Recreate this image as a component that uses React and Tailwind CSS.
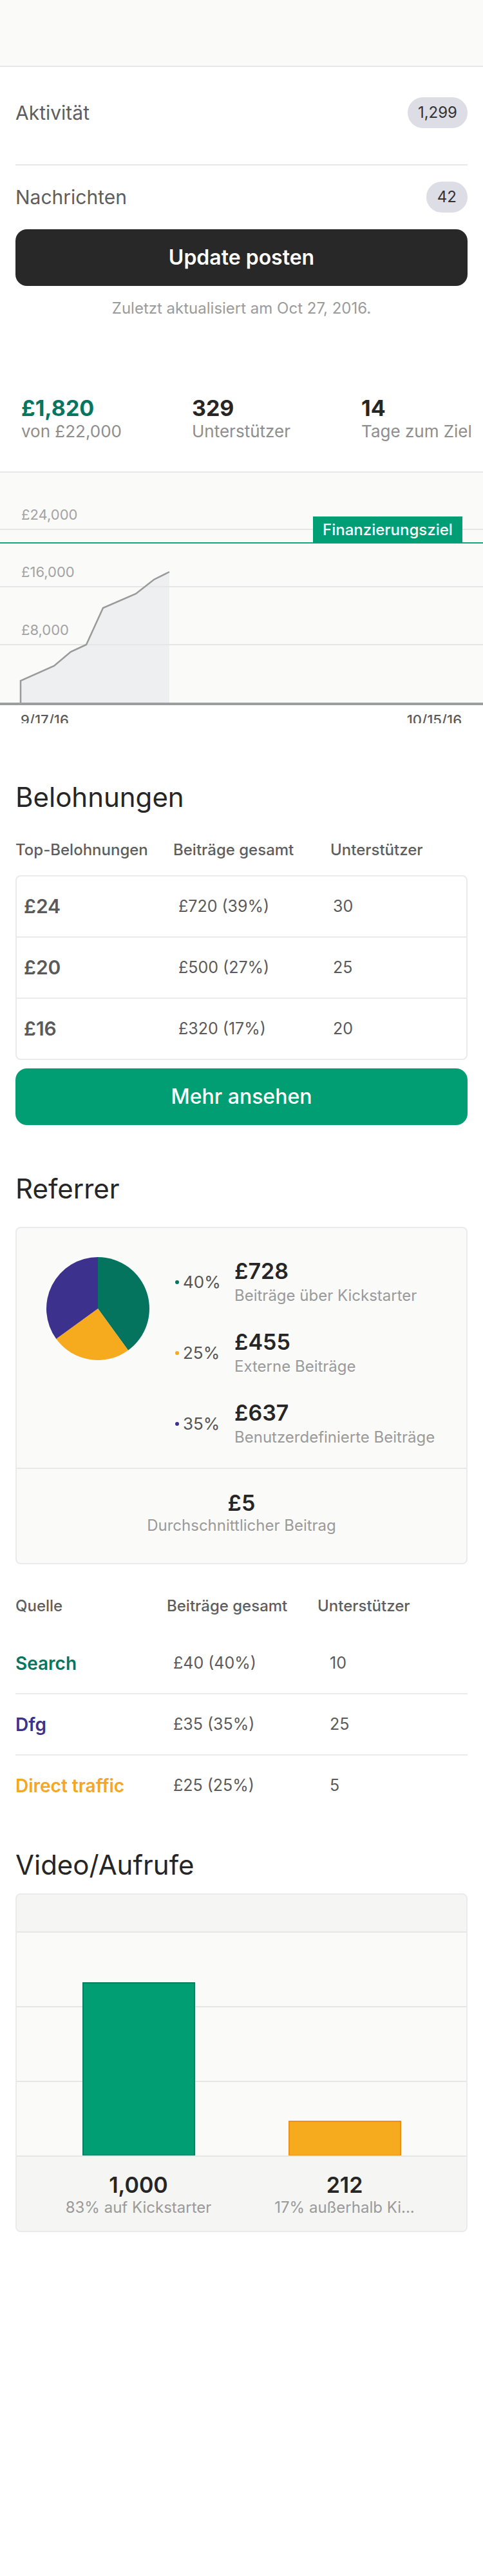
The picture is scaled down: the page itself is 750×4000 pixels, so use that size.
const rewards = [
  { amount: '£24', total: '£720 (39%)', backers: '30' },
  { amount: '£20', total: '£500 (27%)', backers: '25' },
  { amount: '£16', total: '£320 (17%)', backers: '20' },
];

const referrers = [
  { dot: 'bg-[#04745f]', pct: '40%', amount: '£728', label: 'Beiträge über Kickstarter' },
  { dot: 'bg-[#f6ab1e]', pct: '25%', amount: '£455', label: 'Externe Beiträge' },
  { dot: 'bg-[#3c318c]', pct: '35%', amount: '£637', label: 'Benutzerdefinierte Beiträge' },
];

const sources = [
  { name: 'Search', color: 'text-[#077560]', total: '£40 (40%)', backers: '10' },
  { name: 'Dfg', color: 'text-[#3c318c]', total: '£35 (35%)', backers: '25' },
  { name: 'Direct traffic', color: 'text-[#f5a623]', total: '£25 (25%)', backers: '5' },
];

const FundingChart = () => (
  <div className="relative h-[357px] bg-[#fafaf9]">
    <svg className="absolute inset-0" width="750" height="357" viewBox="0 0 750 357">
      <polygon
        points="32,357 32,323 84,300 110,278 134,267 160,210 211,188 239,166 263,154 263,357"
        fill="#eeeff1"
      />
      <line x1="0" y1="88" x2="750" y2="88" stroke="#e6e6e6" strokeWidth="2" />
      <line x1="0" y1="177" x2="750" y2="177" stroke="#e6e6e6" strokeWidth="2" />
      <line x1="0" y1="267" x2="750" y2="267" stroke="#e6e6e6" strokeWidth="2" />
      <line x1="0" y1="109" x2="750" y2="109" stroke="#17a37f" strokeWidth="2" />
      <polyline
        points="32,357 32,323 84,300 110,278 134,267 160,210 211,188 239,166 263,154"
        fill="none"
        stroke="#9a9a9a"
        strokeWidth="2.5"
      />
    </svg>
    <div className="absolute left-[33px] top-[52px] text-[22px] leading-[26px] text-[#a3a3a3]">£24,000</div>
    <div className="absolute left-[33px] top-[141px] text-[22px] leading-[26px] text-[#a3a3a3]">£16,000</div>
    <div className="absolute left-[33px] top-[231px] text-[22px] leading-[26px] text-[#a3a3a3]">£8,000</div>
    <div className="absolute left-[486px] top-[68px] flex h-[41px] w-[232px] items-center justify-center bg-[#009e74] text-[24px] font-medium text-white">
      Finanzierungsziel
    </div>
  </div>
);

const PieChart = () => (
  <svg width="160" height="160" viewBox="0 0 160 160" className="shrink-0">
    <path d="M80,80 L80,0 A80,80 0 0 1 127.02,144.72 Z" fill="#04745f" />
    <path d="M80,80 L127.02,144.72 A80,80 0 0 1 15.28,127.02 Z" fill="#f6ab1e" />
    <path d="M80,80 L15.28,127.02 A80,80 0 0 1 80,0 Z" fill="#3c318c" />
  </svg>
);

const VideoChart = () => (
  <svg width="698" height="350" viewBox="0 0 698 350" className="block bg-[#fafaf9]">
    <line x1="0" y1="1" x2="698" y2="1" stroke="#e6e6e6" strokeWidth="2" />
    <line x1="0" y1="117" x2="698" y2="117" stroke="#e6e6e6" strokeWidth="2" />
    <line x1="0" y1="233" x2="698" y2="233" stroke="#e6e6e6" strokeWidth="2" />
    <rect x="103" y="80" width="173" height="268" fill="#019e73" stroke="#0b7a60" strokeWidth="2" />
    <rect x="423" y="295" width="173" height="53" fill="#f6ab1e" stroke="#ee8f1a" strokeWidth="2" />
    <line x1="0" y1="349" x2="698" y2="349" stroke="#e6e6e6" strokeWidth="2" />
  </svg>
);

export default function App() {
  return (
    <div className="w-[750px] bg-white pb-[532px] font-['Inter',sans-serif] text-[#262626]">
      {/* top bar */}
      <div className="h-[104px] border-b-2 border-[#e7e7e7] bg-[#fafaf9]" />

      {/* activity / messages */}
      <div className="px-[24px]">
        <div className="flex items-center justify-between pt-[47px] pb-[56px]">
          <span className="text-[30px] leading-[36px] text-[#5e5e5e]">Aktivität</span>
          <span className="flex h-[48px] items-center rounded-full bg-[#dcdde5] px-[16px] text-[24px] text-[#333]">1,299</span>
        </div>
        <div className="h-[2px] bg-[#e8e8e8]" />
        <div className="flex items-center justify-between pt-[25px]">
          <span className="text-[30px] leading-[36px] text-[#5e5e5e]">Nachrichten</span>
          <span className="flex h-[48px] items-center rounded-full bg-[#dcdde5] px-[17px] text-[24px] text-[#333]">42</span>
        </div>
        <button className="mt-[26px] flex h-[88px] w-full items-center justify-center rounded-[18px] bg-[#282828] text-[32px] font-semibold text-white">
          Update posten
        </button>
        <p className="mt-[20px] text-center text-[24px] leading-[30px] text-[#9b9b9b]">
          Zuletzt aktualisiert am Oct 27, 2016.
        </p>
      </div>

      {/* stats */}
      <div className="mt-[120px] grid grid-cols-[265px_263px_1fr] pl-[33px]">
        <div>
          <div className="text-[34px] font-bold leading-[40px] text-[#077560]">£1,820</div>
          <div className="mt-[1px] text-[26px] leading-[30px] text-[#8e8e8e]">von £22,000</div>
        </div>
        <div>
          <div className="text-[34px] font-bold leading-[40px]">329</div>
          <div className="mt-[1px] text-[26px] leading-[30px] text-[#8e8e8e]">Unterstützer</div>
        </div>
        <div>
          <div className="text-[34px] font-bold leading-[40px]">14</div>
          <div className="mt-[1px] text-[26px] leading-[30px] text-[#8e8e8e]">Tage zum Ziel</div>
        </div>
      </div>

      {/* funding chart */}
      <div className="mt-[47px] border-t-2 border-b-4 border-t-[#e8e8e8] border-b-[#9b9d9f]">
        <FundingChart />
      </div>
      <div className="flex h-[28px] justify-between overflow-hidden pt-[10px] pl-[32px] pr-[33px] text-[22px] font-medium leading-[26px] text-[#5a5a5a]">
        <span>9/17/16</span>
        <span>10/15/16</span>
      </div>

      {/* rewards */}
      <div className="px-[24px]">
        <h2 className="mt-[90px] text-[42px] leading-[50px]">Belohnungen</h2>
        <div className="mt-[42px] grid grid-cols-[245px_244px_1fr] text-[24px] font-medium leading-[30px] text-[#5d5e60]">
          <span>Top-Belohnungen</span>
          <span>Beiträge gesamt</span>
          <span>Unterstützer</span>
        </div>
        <div className="mt-[24px] rounded-[8px] border-2 border-[#ebebeb]">
          {rewards.map((r, i) => (
            <div
              key={r.amount}
              className={`grid grid-cols-[240px_240px_1fr] items-center pl-[11px] text-[#5a5a5a] ${
                i > 0 ? 'h-[95px] border-t-2 border-[#ebebeb]' : 'h-[93px]'
              }`}
            >
              <span className="text-[30px] font-semibold">{r.amount}</span>
              <span className="text-[25px]">{r.total}</span>
              <span className="text-[25px]">{r.backers}</span>
            </div>
          ))}
        </div>
        <button className="mt-[13px] flex h-[88px] w-full items-center justify-center rounded-[18px] bg-[#019e73] text-[32px] font-medium text-white">
          Mehr ansehen
        </button>

        {/* referrer */}
        <h2 className="mt-[74px] text-[42px] leading-[50px]">Referrer</h2>
        <div className="mt-[34px] rounded-[8px] border-2 border-[#ebebeb] bg-[#fafaf9]">
          <div className="flex items-start pt-[45px] pb-[32px] pl-[46px]">
            <PieChart />
            <div className="mt-[2px] ml-[40px] flex flex-col gap-[37px]">
              {referrers.map((r) => (
                <div key={r.amount} className="flex items-center">
                  <div className="flex w-[92px] items-center gap-[6px]">
                    <span className={`h-[6px] w-[6px] rounded-full ${r.dot}`} />
                    <span className="text-[26px] leading-[30px] text-[#555]">{r.pct}</span>
                  </div>
                  <div>
                    <div className="text-[34px] font-semibold leading-[40px]">{r.amount}</div>
                    <div className="mt-[3px] text-[24px] leading-[30px] text-[#9a9a9a]">{r.label}</div>
                  </div>
                </div>
              ))}
            </div>
          </div>
          <div className="border-t-2 border-[#e8e8e8] pt-[33px] pb-[43px] text-center">
            <div className="text-[34px] font-semibold leading-[40px]">£5</div>
            <div className="text-[24px] leading-[30px] text-[#9a9a9a]">Durchschnittlicher Beitrag</div>
          </div>
        </div>

        {/* sources */}
        <div className="mt-[50px] grid grid-cols-[235px_234px_1fr] text-[24px] font-medium leading-[30px] text-[#5d5e60]">
          <span>Quelle</span>
          <span>Beiträge gesamt</span>
          <span>Unterstützer</span>
        </div>
        <div className="mt-[27px]">
          {sources.map((s, i) => (
            <div
              key={s.name}
              className={`grid grid-cols-[245px_243px_1fr] items-center text-[#5a5a5a] ${
                i > 0 ? 'h-[95px] border-t-2 border-[#ebebeb]' : 'h-[93px]'
              }`}
            >
              <span className={`text-[28px] font-semibold ${s.color}`}>{s.name}</span>
              <span className="text-[25px]">{s.total}</span>
              <span className="text-[25px]">{s.backers}</span>
            </div>
          ))}
        </div>

        {/* video */}
        <h2 className="mt-[52px] text-[42px] leading-[50px]">Video/Aufrufe</h2>
        <div className="mt-[19px] overflow-hidden rounded-[8px] border-2 border-[#ebebeb] bg-[#f5f5f4]">
          <div className="h-[57px]" />
          <VideoChart />
          <div className="grid grid-cols-2 px-[29px] pt-[24px] pb-[21px] text-center">
            <div>
              <div className="text-[34px] font-semibold leading-[40px]">1,000</div>
              <div className="text-[24px] leading-[30px] text-[#9a9a9a]">83% auf Kickstarter</div>
            </div>
            <div>
              <div className="text-[34px] font-semibold leading-[40px]">212</div>
              <div className="text-[24px] leading-[30px] text-[#9a9a9a]">17% außerhalb Ki...</div>
            </div>
          </div>
        </div>
      </div>
    </div>
  );
}
